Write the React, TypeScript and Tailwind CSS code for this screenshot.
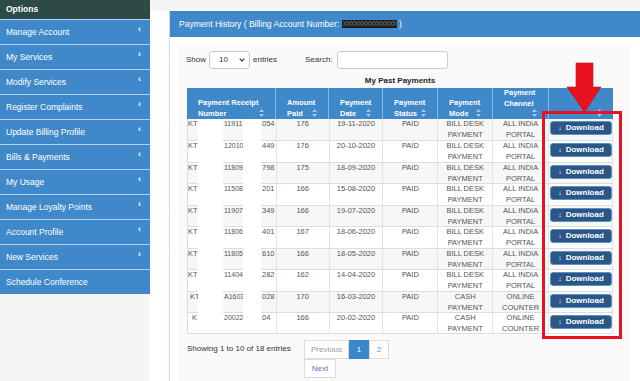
import React from "react";

const menu = [
  "Manage Account",
  "My Services",
  "Modify Services",
  "Register Complaints",
  "Update Billing Profile",
  "Bills & Payments",
  "My Usage",
  "Manage Loyalty Points",
  "Account Profile",
  "New Services",
  "Schedule Conference",
];

type Row = {
  a: string;
  b: string;
  c: string;
  shift: number;
  amt: string;
  date: string;
  mode: [string, string];
  ch: [string, string];
  h: number;
};

const bill: [string, string] = ["BILL DESK", "PAYMENT"];
const portal: [string, string] = ["ALL INDIA", "PORTAL"];
const cash: [string, string] = ["CASH", "PAYMENT"];
const counter: [string, string] = ["ONLINE", "COUNTER"];

const rows: Row[] = [
  { a: "KT", b: "11911", c: "054", shift: 0, amt: "176", date: "19-11-2020", mode: bill, ch: portal, h: 22 },
  { a: "KT", b: "12010", c: "449", shift: 0, amt: "176", date: "20-10-2020", mode: bill, ch: portal, h: 22 },
  { a: "KT", b: "11809", c: "798", shift: 0, amt: "175", date: "18-09-2020", mode: bill, ch: portal, h: 21 },
  { a: "KT", b: "11508", c: "201", shift: 0, amt: "166", date: "15-08-2020", mode: bill, ch: portal, h: 22 },
  { a: "KT", b: "11907", c: "349", shift: 0, amt: "166", date: "19-07-2020", mode: bill, ch: portal, h: 21 },
  { a: "KT", b: "11806", c: "401", shift: 0, amt: "167", date: "18-06-2020", mode: bill, ch: portal, h: 22 },
  { a: "KT", b: "11805", c: "610", shift: 0, amt: "166", date: "18-05-2020", mode: bill, ch: portal, h: 21 },
  { a: "KT", b: "11404", c: "282", shift: 0, amt: "162", date: "14-04-2020", mode: bill, ch: portal, h: 22 },
  { a: "KT", b: "A1603", c: "028", shift: 2, amt: "170", date: "16-03-2020", mode: cash, ch: counter, h: 21 },
  { a: "K", b: "20022", c: "04", shift: 4, amt: "166", date: "20-02-2020", mode: cash, ch: counter, h: 21 },
];

const widths = [89, 53, 54, 55, 55, 56, 64];

function Sort() {
  return (
    <svg width="5" height="8" viewBox="0 0 5 8">
      <path d="M2.5 0L5 3H0z M0 5h5L2.5 8z" fill="#a7c6e4" />
    </svg>
  );
}

function HeadCell({ w, lines, last, channel }: { w: number; lines: string[]; last?: boolean; channel?: boolean }) {
  return (
    <div
      className={`relative h-full flex flex-col justify-end pl-[11px] text-white font-bold text-[7.5px] leading-[10.5px] ${
        channel ? "pb-[10px]" : "pb-0"
      } ${last ? "" : "border-r border-[#8ab6e0]"}`}
      style={{ width: w }}
    >
      {lines.map((l) => (
        <div key={l}>{l}</div>
      ))}
      <div className="absolute right-[11px] bottom-[2px]">
        <Sort />
      </div>
    </div>
  );
}

export default function App() {
  return (
    <div className="relative w-[640px] h-[381px] overflow-hidden flex bg-white font-['Liberation_Sans',Arial,sans-serif]">
      {/* Sidebar */}
      <aside className="w-[150px] shrink-0 bg-[#f5f5f5] flex flex-col">
        <div className="h-[19px] bg-[#2e4a46] text-white font-bold text-[8.5px] pl-[6px] flex items-center">
          Options
        </div>
        {menu.map((m, i) => (
          <div
            key={m}
            className="h-[25px] border-t border-[#b3d0ec] bg-[#3f88c9] text-white text-[8.5px] pl-[6px] pr-[9px] flex items-center justify-between"
          >
            <span>{m}</span>
            {i < menu.length - 1 && <span className="text-[9px] leading-none -mt-[5px] font-bold">‹</span>}
          </div>
        ))}
      </aside>

      {/* Main */}
      <main className="flex-1 flex flex-col">
        <div className="h-[11px] bg-[#f5f5f5] shrink-0" />
        <div className="flex-1 pl-[19px]">
          <div className="w-[480px] h-full border-l border-[#c9dcef] flex flex-col">
            <div className="h-[26px] bg-[#3f88c9] text-white text-[8.5px] pl-[9px] flex items-center shrink-0">
              <span>Payment History ( Billing Account Number:&nbsp;</span>
              <span className="bg-[#1c1c1c] text-[#5a5a5a] font-bold text-[7.5px] leading-[8px] tracking-[-1.2px] px-[1px]">
                XXXXXXXXXXXXXX
              </span>
              <span>&nbsp;)</span>
            </div>
            <div className="flex-1 pl-[8px] pt-[8px]">
              <div className="w-[452px] h-full bg-[#fafafa] pt-[6px] pl-[8px] text-[#333]">
                {/* Controls */}
                <div className="flex items-center h-[18px] text-[8px]">
                  <div className="w-[119px] flex items-center">
                    <span>Show</span>
                    <div className="ml-[3px] w-[41px] h-[18px] border border-[#cccccc] rounded-[3px] bg-white flex items-center justify-between pl-[9px] pr-[4px]">
                      <span>10</span>
                      <svg width="6" height="4" viewBox="0 0 6 4">
                        <path d="M0.7 0.7L3 3L5.3 0.7" fill="none" stroke="#333" strokeWidth="1.1" />
                      </svg>
                    </div>
                    <span className="ml-[3px]">entries</span>
                  </div>
                  <span>Search:</span>
                  <div className="ml-[4px] w-[111px] h-[18px] border border-[#cccccc] rounded-[3px] bg-white" />
                </div>

                {/* Caption */}
                <div className="mt-[7px] ml-[1px] w-[426px] h-[10px] text-center font-bold text-[8px] leading-[10px] text-[#222]">
                  My Past Payments
                </div>

                {/* Table */}
                <div className="relative mt-[2px] ml-[1px] w-[426px]">
                  <div className="flex h-[31px] bg-[#3f88c9]">
                    <HeadCell w={widths[0]} lines={["Payment Receipt", "Number"]} />
                    <HeadCell w={widths[1]} lines={["Amount", "Paid"]} />
                    <HeadCell w={widths[2]} lines={["Payment", "Date"]} />
                    <HeadCell w={widths[3]} lines={["Payment", "Status"]} />
                    <HeadCell w={widths[4]} lines={["Payment", "Mode"]} />
                    <HeadCell w={widths[5]} lines={["Payment", "Channel"]} channel />
                    <HeadCell w={widths[6]} lines={[]} last />
                  </div>
                  <div className="border-l border-[#dddddd] text-[7.5px] leading-[10.5px] text-[#555]">
                    {rows.map((r, i) => (
                      <div
                        key={i}
                        className={`flex border-b border-[#dddddd] ${i % 2 === 0 ? "bg-[#f7f7f7]" : "bg-white"}`}
                        style={{ height: r.h }}
                      >
                        <div className="flex border-r border-[#e3e3e3]" style={{ width: widths[0] }}>
                          <span className="w-[36px]" style={{ paddingLeft: r.shift }}>
                            {r.a}
                          </span>
                          <span className="w-[20px] text-[7px] whitespace-nowrap">{r.b}</span>
                          <span className="w-[18px]" />
                          <span>{r.c}</span>
                        </div>
                        <div className="text-center border-r border-[#e3e3e3]" style={{ width: widths[1] }}>
                          {r.amt}
                        </div>
                        <div className="text-center border-r border-[#e3e3e3]" style={{ width: widths[2] }}>
                          {r.date}
                        </div>
                        <div className="text-center border-r border-[#e3e3e3]" style={{ width: widths[3] }}>
                          PAID
                        </div>
                        <div className="text-center border-r border-[#e3e3e3]" style={{ width: widths[4] }}>
                          <div>{r.mode[0]}</div>
                          <div>{r.mode[1]}</div>
                        </div>
                        <div className="text-center border-r border-[#e3e3e3]" style={{ width: widths[5] }}>
                          <div>{r.ch[0]}</div>
                          <div>{r.ch[1]}</div>
                        </div>
                        <div className="pt-[2px] pl-[1px] border-r border-[#e3e3e3]" style={{ width: widths[6] }}>
                          <div className="w-[62px] h-[14px] rounded-[3px] bg-[#2b5787] border border-[#5d90c6] text-white font-bold text-[8px] flex items-center justify-center gap-[4px]">
                            <span className="text-[7px]">↓</span>
                            <span>Download</span>
                          </div>
                        </div>
                      </div>
                    ))}
                  </div>
                  {/* redaction blocks */}
                  <div className="absolute top-[31px] left-[11px] w-[25px] h-[203px] bg-white" />
                  <div className="absolute top-[31px] left-[56px] w-[18px] h-[203px] bg-white" />
                </div>

                {/* Footer */}
                <div className="mt-[6px] ml-[1px] flex text-[8px]">
                  <div className="w-[117px] h-[18px] flex items-center text-[#333]">Showing 1 to 10 of 18 entries</div>
                  <div className="flex flex-col">
                    <div className="flex h-[19px]">
                      <div className="w-[45px] border border-[#dddddd] bg-white text-[#999] flex items-center justify-center">
                        Previous
                      </div>
                      <div className="w-[20px] bg-[#3a87c9] border border-[#3a87c9] text-white flex items-center justify-center">
                        1
                      </div>
                      <div className="w-[20px] border border-[#dddddd] bg-white text-[#5f93c8] flex items-center justify-center">
                        2
                      </div>
                    </div>
                    <div className="w-[32px] h-[19px] border border-[#dddddd] bg-white text-[#4a80bf] flex items-center justify-center">
                      Next
                    </div>
                  </div>
                </div>
              </div>
            </div>
          </div>
        </div>
      </main>

      {/* Red annotation overlays */}
      <svg className="absolute left-[565px] top-[62px]" width="38" height="52" viewBox="0 0 38 52">
        <polygon points="11,1 28,1 28,25 36,25 19.5,50 2,25 11,25" fill="#e8131f" stroke="#b5121b" strokeWidth="0.6" />
      </svg>
      <div className="absolute left-[542px] top-[111px] w-[80px] h-[228px] border-[3px] border-[#e8131f]" />
    </div>
  );
}
